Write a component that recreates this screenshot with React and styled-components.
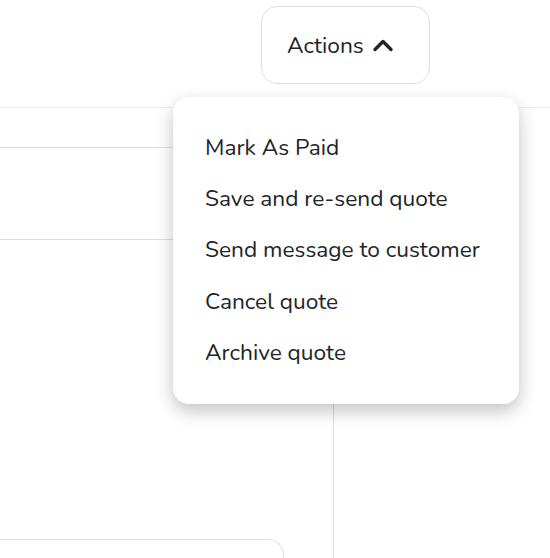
import React from "react";
import styled, { createGlobalStyle } from "styled-components";

const GlobalStyle = createGlobalStyle`
  html, body {
    margin: 0;
    padding: 0;
    background: #ffffff;
  }
  body {
    font-family: "Nunito", "Lato", sans-serif;
    color: #212529;
  }
`;

const Page = styled.div`
  position: relative;
  width: 550px;
  height: 558px;
  overflow: hidden;
`;

const Header = styled.div`
  height: 108px;
  box-sizing: border-box;
  border-bottom: 1px solid #ededed;
  padding: 6px 0 0 261px;
`;

const ActionsButton = styled.button`
  display: flex;
  align-items: center;
  gap: 8px;
  box-sizing: border-box;
  width: 169px;
  height: 78px;
  padding: 0 0 0 25px;
  border: 1px solid #dedede;
  border-radius: 16px;
  background: #ffffff;
  font-family: inherit;
  font-size: 22.7px;
  color: #212529;
  cursor: pointer;
`;

const Body = styled.div`
  display: grid;
  grid-template-columns: 334px 1fr;
  height: 450px;
`;

const LeftColumn = styled.div`
  display: flex;
  flex-direction: column;
  border-right: 1px solid #dcdcdc;
`;

const Row = styled.div`
  height: ${(p) => p.h}px;
  border-bottom: 1px solid #dcdcdc;
`;

const Spacer = styled.div`
  flex: 1;
`;

const BottomCard = styled.div`
  margin-left: -1px;
  width: 283px;
  height: 18px;
  border: 1px solid #e2e2e2;
  border-bottom: none;
  border-radius: 0 16px 0 0;
`;

const Menu = styled.ul`
  position: absolute;
  top: 97px;
  left: 173px;
  width: 346px;
  height: 307px;
  box-sizing: border-box;
  margin: 0;
  padding: 25px 0 0 32px;
  list-style: none;
  background: #ffffff;
  border-radius: 16px;
  box-shadow: 0 7px 18px rgba(0, 0, 0, 0.24);
`;

const MenuItem = styled.li`
  height: 51.2px;
  line-height: 51.2px;
  font-size: 22.7px;
  color: #212529;
  white-space: nowrap;
`;

const Chevron = () => (
  <svg width="22" height="14" viewBox="0 0 22 14" fill="none">
    <polyline
      points="3,11.5 11,3.5 19,11.5"
      stroke="#212529"
      strokeWidth="3.4"
      strokeLinecap="round"
      strokeLinejoin="round"
    />
  </svg>
);

const items = [
  "Mark As Paid",
  "Save and re-send quote",
  "Send message to customer",
  "Cancel quote",
  "Archive quote",
];

export default function App() {
  return (
    <Page>
      <GlobalStyle />
      <Header>
        <ActionsButton>
          Actions
          <Chevron />
        </ActionsButton>
      </Header>
      <Body>
        <LeftColumn>
          <Row h={39} />
          <Row h={91} />
          <Spacer />
          <BottomCard />
        </LeftColumn>
        <div />
      </Body>
      <Menu>
        {items.map((label) => (
          <MenuItem key={label}>{label}</MenuItem>
        ))}
      </Menu>
    </Page>
  );
}
